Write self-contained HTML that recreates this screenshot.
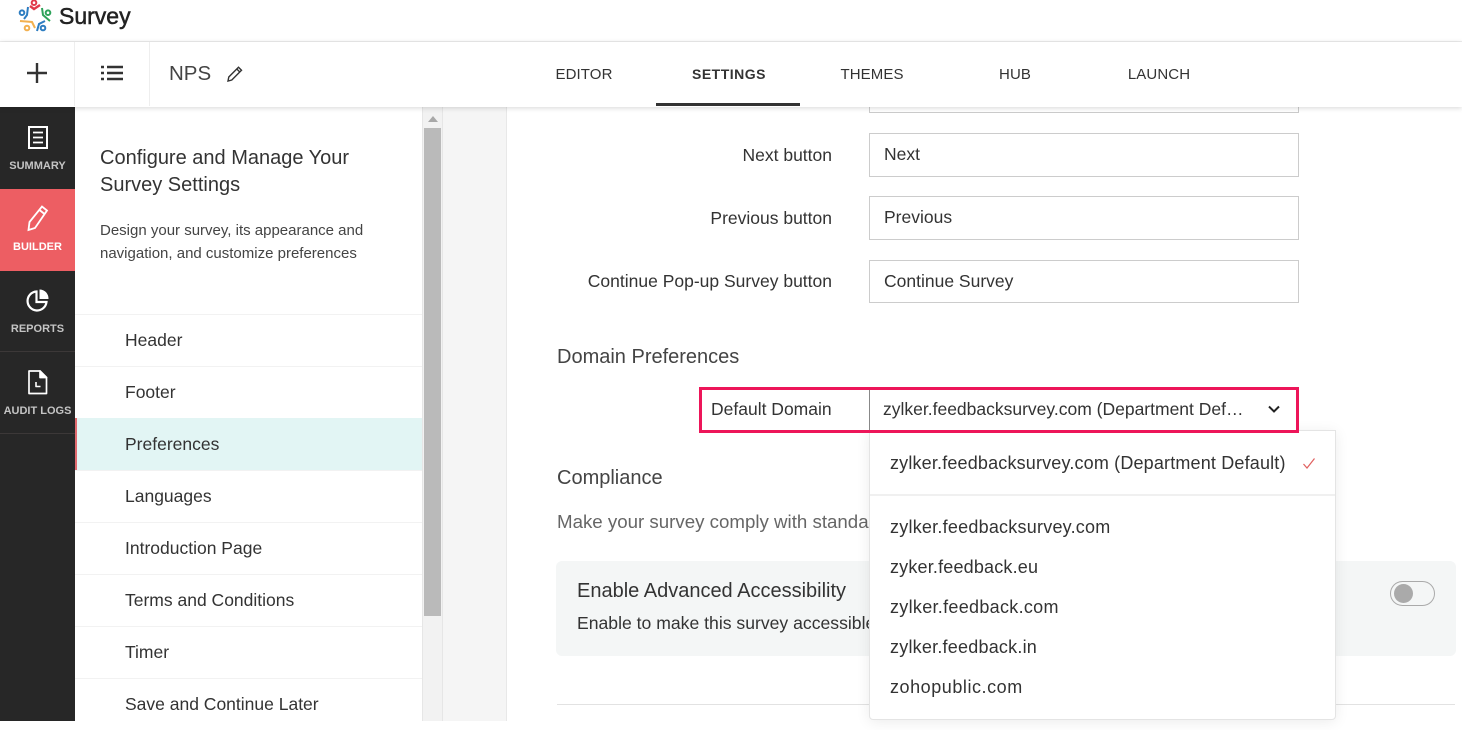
<!DOCTYPE html>
<html><head><meta charset="utf-8"><style>
*{box-sizing:border-box}
html,body{margin:0;padding:0;width:1462px;height:721px;overflow:hidden;background:#fff;font-family:"Liberation Sans",sans-serif;color:#333}
.a{position:absolute}
.t{position:absolute;white-space:nowrap;line-height:20px}
.nav{font-size:15px;letter-spacing:.1px;color:#333;text-align:center;transform:translateX(-50%);top:66px}
.side{position:absolute;left:0;width:75px;text-align:center;font-size:11px;font-weight:bold;color:#c4c4c4;white-space:nowrap}
.li{position:absolute;left:75px;width:347px;height:52px;border-top:1px solid #f2f2f2;font-size:17.5px;padding-left:50px;line-height:50px;color:#333}
.lbl{position:absolute;right:630px;font-size:17.5px;white-space:nowrap;line-height:20px}
.inp{position:absolute;left:869px;width:430px;height:44px;border:1px solid #ccc;background:#fff;font-size:17.5px;padding-left:14px;line-height:40px}
.h{font-size:20px;color:#444}
.dd{font-size:18px;position:absolute;left:890px;white-space:nowrap;line-height:20px;color:#333}
</style></head><body>
<div class="a" style="left:0;top:0;width:1462px;height:42px;background:#fff;border-bottom:1px solid #eee"></div>
<svg class="a" style="left:18px;top:0" width="36" height="34" viewBox="0 0 36 34" fill="none" stroke-width="2">
<circle cx="16" cy="2.700" r="2.300" stroke="#e0394a"/><path d="M12 6l4 3 6-4" stroke="#e0394a" stroke-width="2.400"/>
<circle cx="4" cy="12.700" r="2.300" stroke="#2d7dc1"/><path d="M10 7l-1 8-3 4" stroke="#2d7dc1"/>
<circle cx="30" cy="12.700" r="2.300" stroke="#2ea35a"/><path d="M24 8l1 7 7 6" stroke="#2ea35a"/>
<circle cx="9" cy="28" r="2.300" stroke="#f2b04f"/><path d="M2 21l12 1 3 6" stroke="#f2b04f"/>
<circle cx="25" cy="28" r="2.300" stroke="#2d7dc1"/><path d="M19 31l2-7 6-3" stroke="#2d7dc1"/>
</svg>
<div class="t" style="left:59px;top:6px;font-size:23px;color:#222;-webkit-text-stroke:.5px #222">Survey</div>

<div class="a" style="left:0;top:42px;width:1462px;height:65px;background:#fff;box-shadow:0 1px 5px rgba(0,0,0,.16);z-index:3">
<div class="a" style="left:74px;top:0;width:1px;height:64px;background:#eee"></div>
<div class="a" style="left:149px;top:0;width:1px;height:64px;background:#eee"></div>
<svg class="a" style="left:26px;top:20px" width="22" height="22"><path d="M11 1v20M1 11h20" stroke="#333" stroke-width="2.400"/></svg>
<svg class="a" style="left:101px;top:23px" width="22" height="16"><path d="M6 2h16M6 8h16M6 14h16" stroke="#333" stroke-width="2.500"/><path d="M0 2h3M0 8h3M0 14h3" stroke="#333" stroke-width="2.500"/></svg>
<div class="t" style="left:169px;top:22px;font-size:20.500px;color:#444">NPS</div>
<svg class="a" style="left:226px;top:23px" width="18" height="18" fill="none" stroke="#333" stroke-width="1.400"><path d="M2 16l.8-4L12.500 2.300l3 3L5.800 15z"/><path d="M10.800 4l3 3"/></svg>
<div class="a" style="left:656px;top:61px;width:144px;height:3px;background:#333"></div>
</div>
<div class="t nav" style="left:584px;z-index:4;top:65px">EDITOR</div>
<div class="t nav" style="left:729px;font-size:14px;font-weight:bold;letter-spacing:.5px;z-index:4;top:64px">SETTINGS</div>
<div class="t nav" style="left:872px;z-index:4;top:65px">THEMES</div>
<div class="t nav" style="left:1015px;z-index:4;top:65px">HUB</div>
<div class="t nav" style="left:1159px;z-index:4;top:65px">LAUNCH</div>

<div class="a" style="left:0;top:107px;width:75px;height:614px;background:#272727"></div>
<div class="a" style="left:0;top:189px;width:75px;height:82px;background:#ed5e63"></div>
<div class="a" style="left:0;top:351px;width:75px;height:1px;background:#3c3838"></div>
<div class="a" style="left:0;top:433px;width:75px;height:1px;background:#3c3838"></div>
<svg class="a" style="left:27px;top:125px" width="22" height="24" fill="none" stroke="#fff"><rect x="2" y="2" width="18" height="21" stroke-width="2"/><path d="M6 7.500h10M6 12.500h10M6 17.500h10" stroke-width="1.700"/></svg>
<div class="side" style="top:160px;line-height:13px">SUMMARY</div>
<svg class="a" style="left:26px;top:204px" width="24" height="28" fill="none" stroke="#fff" stroke-width="1.800"><path d="M2.500 26L3.500 18 16 2.500 21 6.500 9 24z"/><path d="M13.500 6l5 4"/></svg>
<div class="side" style="top:241px;line-height:13px;color:#fff">BUILDER</div>
<svg class="a" style="left:26px;top:288px" width="24" height="24" fill="none" stroke="#fff" stroke-width="2.200"><path d="M10.500 3.500a9.500 9.500 0 1 0 10 10.500h-10z"/><path d="M13.500 1.500a9 9 0 0 1 9 9.500h-9z" fill="#fff" stroke="none"/></svg>
<div class="side" style="top:323px;line-height:13px">REPORTS</div>
<svg class="a" style="left:27px;top:370px" width="22" height="25" fill="none" stroke="#fff" stroke-width="1.700" stroke-linejoin="round"><path d="M2 1h11l6.500 6.500V23.500H2z"/><path d="M13 1v6.500h6.500z" fill="#fff"/><path d="M9 12v4.500h4.500" stroke-width="1.600"/></svg>
<div class="side" style="top:405px;line-height:13px">AUDIT LOGS</div>

<div class="a" style="left:422px;top:107px;width:21px;height:614px;background:#f2f2f2;border-left:1px solid #e6e6e6;border-right:1px solid #e6e6e6"></div>
<div class="a" style="left:424px;top:128px;width:17px;height:488px;background:#bababa"></div>
<div class="a" style="left:428px;top:116px;width:0;height:0;border-left:5px solid transparent;border-right:5px solid transparent;border-bottom:6px solid #a8a8a8"></div>
<div class="a" style="left:443px;top:107px;width:64px;height:614px;background:#f5f5f5;border-right:1px solid #e8e8e8"></div>

<div class="t" style="left:100px;top:145px;font-size:20px;line-height:27px;color:#333;white-space:normal;width:290px">Configure and Manage Your Survey Settings</div>
<div class="t" style="left:100px;top:219px;font-size:15px;line-height:23px;color:#444;white-space:normal;width:300px">Design your survey, its appearance and navigation, and customize preferences</div>

<div class="li" style="top:314px">Header</div>
<div class="li" style="top:366px">Footer</div>
<div class="li" style="top:418px;background:#e2f5f4;border-top:0;border-left:2px solid #e16a6f;padding-left:48px;line-height:52px">Preferences</div>
<div class="li" style="top:470px">Languages</div>
<div class="li" style="top:522px">Introduction Page</div>
<div class="li" style="top:574px">Terms and Conditions</div>
<div class="li" style="top:626px">Timer</div>
<div class="li" style="top:678px">Save and Continue Later</div>

<div class="a" style="left:869px;top:100px;width:430px;height:13px;border:1px solid #ccc"></div>
<div class="lbl" style="top:145px">Next button</div>
<div class="inp" style="top:133px">Next</div>
<div class="lbl" style="top:208px">Previous button</div>
<div class="inp" style="top:196px">Previous</div>
<div class="lbl" style="top:271px">Continue Pop-up Survey button</div>
<div class="inp" style="top:260px;height:43px">Continue Survey</div>

<div class="t h" style="left:557px;top:347px">Domain Preferences</div>

<div class="t h" style="left:557px;top:468px">Compliance</div>
<div class="t" style="left:557px;top:512px;font-size:18.700px;color:#666">Make your survey comply with standards</div>
<div class="a" style="left:556px;top:561px;width:900px;height:95px;background:#f4f6f6;border-radius:6px"></div>
<div class="t" style="left:577px;top:581px;font-size:20px;color:#333">Enable Advanced Accessibility</div>
<div class="t" style="left:577px;top:613px;font-size:17.600px;color:#333">Enable to make this survey accessible</div>
<div class="a" style="left:1390px;top:581px;width:45px;height:25px;border:1px solid #aaa;border-radius:13px"><div class="a" style="left:3px;top:2px;width:19px;height:19px;border-radius:50%;background:#aaa"></div></div>
<div class="a" style="left:557px;top:704px;width:898px;height:1px;background:#e2e2e2"></div>

<div class="a" style="left:869px;top:430px;width:467px;height:290px;background:#fff;border:1px solid #e4e4e4;border-radius:0 0 4px 4px;box-shadow:0 2px 14px rgba(0,0,0,.08)"></div>
<div class="dd" style="top:453px;letter-spacing:.17px">zylker.feedbacksurvey.com (Department Default)</div>
<svg class="a" style="left:1302px;top:457px" width="14" height="13" fill="none" stroke="#e0605f" stroke-width="1.200"><path d="M1.500 7l3.500 4 7.500-9.500"/></svg>
<div class="a" style="left:870px;top:494px;width:465px;height:2px;background:#f0f0f0"></div>
<div class="dd" style="top:517px;letter-spacing:.23px">zylker.feedbacksurvey.com</div>
<div class="dd" style="top:557px;letter-spacing:.18px">zyker.feedback.eu</div>
<div class="dd" style="top:597px;letter-spacing:.3px">zylker.feedback.com</div>
<div class="dd" style="top:637px;letter-spacing:.22px">zylker.feedback.in</div>
<div class="dd" style="top:677px;letter-spacing:.55px">zohopublic.com</div>

<div class="a" style="left:699px;top:387px;width:600px;height:46px;border:3px solid #ed1559;background:#fff"></div>
<div class="a" style="left:869px;top:390px;width:1px;height:40px;background:#888"></div>
<div class="t" style="left:711px;top:399px;font-size:17.500px">Default Domain</div>
<div class="t" style="left:883px;top:399px;font-size:17.500px;color:#333">zylker.feedbacksurvey.com (Department Def…</div>
<svg class="a" style="left:1267px;top:405px" width="14" height="9" fill="none" stroke="#222" stroke-width="2"><path d="M2 1.500l5 5 5-5"/></svg>
</body></html>
